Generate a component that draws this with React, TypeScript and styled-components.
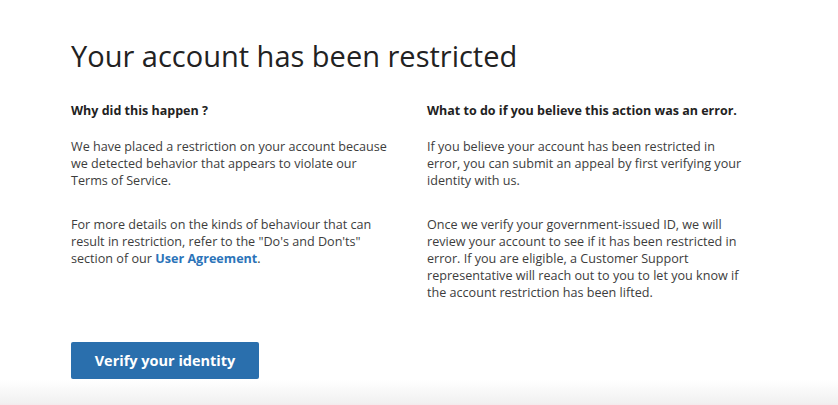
import styled, { createGlobalStyle } from "styled-components";

const GlobalStyle = createGlobalStyle`
  html, body {
    margin: 0;
    padding: 0;
    background: #ffffff;
  }
  body {
    font-family: "Open Sans", "Noto Sans", sans-serif;
    color: #333333;
  }
`;

const Page = styled.div`
  height: 405px;
  box-sizing: border-box;
  display: flex;
  flex-direction: column;
  background: linear-gradient(
    to bottom,
    #ffffff 0,
    #ffffff 380px,
    #f1f1f1 403px,
    #f6e9ec 405px
  );
`;

const Content = styled.main`
  padding: 36px 0 0 71px;
  width: 720px;
`;

const Title = styled.h1`
  margin: 0;
  font-size: 29px;
  font-weight: 400;
  line-height: 40px;
  color: #222222;
`;

const Columns = styled.div`
  display: grid;
  grid-template-columns: 324px 324px;
  column-gap: 32px;
  margin-top: 26px;
`;

const Column = styled.section`
  display: flex;
  flex-direction: column;
`;

const Heading = styled.h2`
  margin: 0 0 19px;
  font-size: 12.5px;
  font-weight: 700;
  line-height: 17px;
  color: #222222;
`;

const Paragraph = styled.p`
  margin: 0 0 26px;
  font-size: 12.6px;
  line-height: 17.2px;
  color: #3d3d3d;
`;

const Link = styled.a`
  color: #2b74b9;
  font-weight: 700;
  text-decoration: none;
`;

const Button = styled.button`
  margin-top: 14px;
  width: 188px;
  height: 37px;
  border: none;
  border-radius: 2px;
  background: #2a6fad;
  color: #ffffff;
  font-family: "Open Sans", "Noto Sans", sans-serif;
  font-size: 14.5px;
  font-weight: 700;
  cursor: pointer;
`;

export default function App() {
  return (
    <>
      <GlobalStyle />
      <Page>
        <Content>
          <Title>Your account has been restricted</Title>
          <Columns>
            <Column>
              <Heading>Why did this happen ?</Heading>
              <Paragraph>
                We have placed a restriction on your account because we detected
                behavior that appears to violate our Terms of Service.
              </Paragraph>
              <Paragraph>
                For more details on the kinds of behaviour that can result in
                restriction, refer to the "Do's and Don'ts" section of our{" "}
                <Link href="#">User Agreement</Link>.
              </Paragraph>
            </Column>
            <Column>
              <Heading>What to do if you believe this action was an error.</Heading>
              <Paragraph>
                If you believe your account has been restricted in error, you can
                submit an appeal by first verifying your identity with us.
              </Paragraph>
              <Paragraph>
                Once we verify your government-issued ID, we will review your
                account to see if it has been restricted in error. If you are
                eligible, a Customer Support representative will reach out to you
                to let you know if the account restriction has been lifted.
              </Paragraph>
            </Column>
          </Columns>
          <Button>Verify your identity</Button>
        </Content>
      </Page>
    </>
  );
}
